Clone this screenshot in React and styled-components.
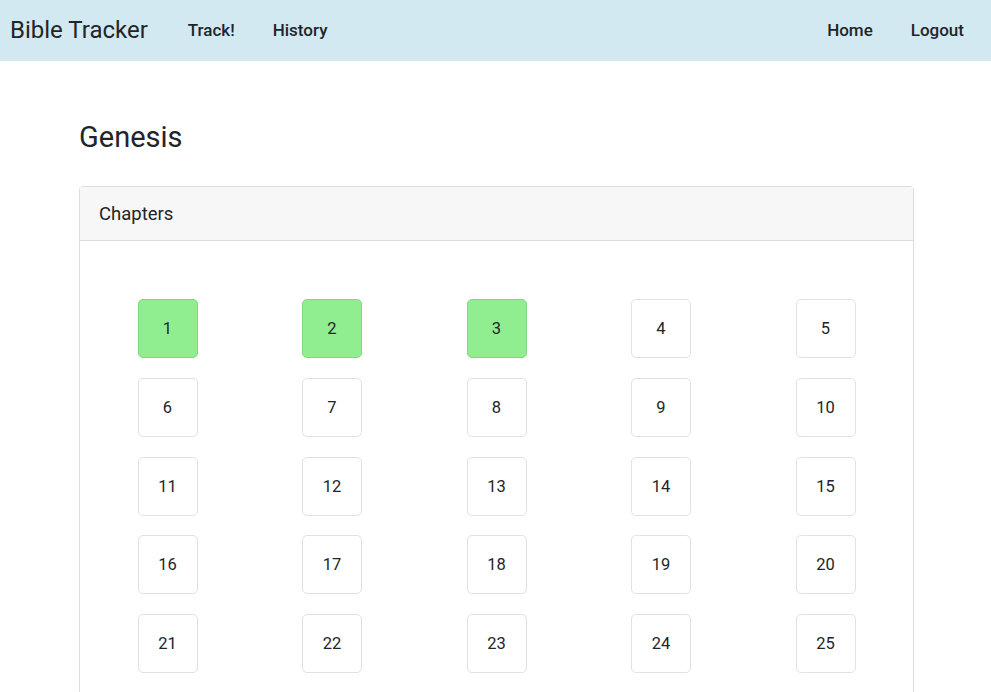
import React from "react";
import styled, { createGlobalStyle } from "styled-components";

const GlobalStyle = createGlobalStyle`
  body {
    margin: 0;
    font-family: Roboto, "Liberation Sans", sans-serif;
    color: #212529;
    background: #fff;
  }
`;

const Navbar = styled.nav`
  height: 61px;
  background: #d3e9f1;
  display: flex;
  align-items: center;
  padding: 0 8px 1px 10px;
  box-sizing: border-box;
`;

const Brand = styled.span`
  font-size: 24px;
  color: #212529;
  margin-right: 21px;
`;

const NavGroup = styled.div`
  display: flex;
  align-items: center;
  margin-left: ${(p) => (p.right ? "auto" : "0")};
`;

const NavLink = styled.a`
  font-size: 17px;
  font-weight: 500;
  color: #212529;
  padding: 0 19px;
  text-decoration: none;
`;

const Main = styled.main`
  padding: 59px 77px 0 79px;
`;

const Title = styled.h3`
  font-size: 29px;
  font-weight: 400;
  line-height: 35px;
  margin: 0 0 31px;
`;

const Card = styled.section`
  border: 1px solid #dcdcdc;
  border-radius: 4px;
  width: 835px;
  box-sizing: border-box;
`;

const CardHeader = styled.div`
  background: #f7f7f7;
  border-bottom: 1px solid #dcdcdc;
  height: 53px;
  display: flex;
  align-items: center;
  padding: 0 19px;
  font-size: 18.5px;
`;

const ChapterGrid = styled.div`
  display: grid;
  grid-template-columns: repeat(5, 1fr);
  justify-items: center;
  row-gap: 19.75px;
  padding: 58px 5.25px 40px 5.25px;
`;

const Chapter = styled.div`
  width: 60px;
  height: 59px;
  box-sizing: border-box;
  border: 1px solid ${(p) => (p.read ? "#80d880" : "#e2e2e2")};
  background: ${(p) => (p.read ? "#90ee90" : "#fff")};
  border-radius: 5px;
  display: flex;
  align-items: center;
  justify-content: center;
  font-size: 16.5px;
  color: #212529;
`;

const read = [1, 2, 3];
const chapters = Array.from({ length: 50 }, (_, i) => i + 1);

export default function App() {
  return (
    <>
      <GlobalStyle />
      <Navbar>
        <Brand>Bible Tracker</Brand>
        <NavGroup>
          <NavLink>Track!</NavLink>
          <NavLink>History</NavLink>
        </NavGroup>
        <NavGroup right>
          <NavLink>Home</NavLink>
          <NavLink>Logout</NavLink>
        </NavGroup>
      </Navbar>
      <Main>
        <Title>Genesis</Title>
        <Card>
          <CardHeader>Chapters</CardHeader>
          <ChapterGrid>
            {chapters.map((c) => (
              <Chapter key={c} read={read.includes(c)}>
                {c}
              </Chapter>
            ))}
          </ChapterGrid>
        </Card>
      </Main>
    </>
  );
}
